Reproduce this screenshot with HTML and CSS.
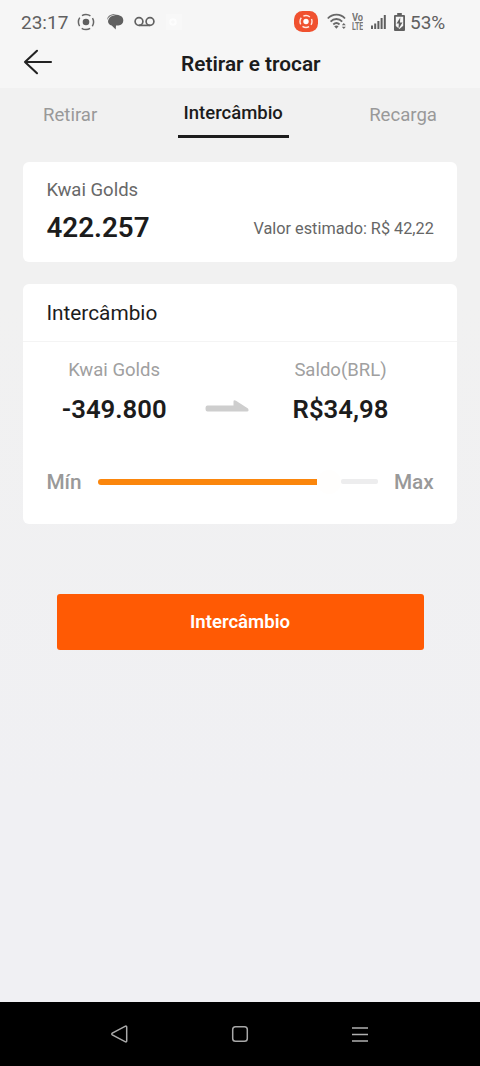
FILE: index.html
```html
<!DOCTYPE html>
<html lang="pt-BR">
<head>
<meta charset="utf-8">
<title>Retirar e trocar</title>
<link rel="stylesheet" href="styles.css">
</head>
<body>
<div class="screen">
  <div class="top">
    <div class="status">
      <span class="clock">23:17</span>
      <svg class="ic-record" width="18" height="18" viewBox="0 0 18 18"><circle cx="9" cy="9" r="3.300" fill="#5e5e5e"/><circle cx="9" cy="9" r="7.600" fill="none" stroke="#666" stroke-width="1.500" stroke-dasharray="8.900 3.038" stroke-dashoffset="4.450"/></svg>
      <svg class="ic-chat" width="18" height="18" viewBox="0 0 18 18"><path d="M1.200 7C.8 3.200 4.500 1 8.500 1h4C8 1.300 3.200 2.800 1.200 7z" fill="#808080"/><path d="M8.500 2.200c5.500-1 8.800 1.500 8.800 5.200 0 2.800-2 4.800-5 5.200h-2.300l-.3 4-4-4C3.500 12.300 2 10.500 2 8 2.600 5 4.700 3 8.500 2.200z" fill="#606060"/></svg>
      <svg class="ic-voice" width="21" height="12" viewBox="0 0 21 12"><g fill="none" stroke="#626262" stroke-width="1.700"><circle cx="5" cy="5.500" r="3.900"/><circle cx="16" cy="5.500" r="3.900"/><path d="M5 9.400h11"/></g></svg>
      <svg class="ic-faint" width="16" height="16" viewBox="0 0 16 16"><rect width="16" height="16" fill="#f8f8f8"/><circle cx="7" cy="8" r="2.800" fill="none" stroke="#fdfdfd" stroke-width="2"/></svg>
      <svg class="ic-rec" width="24" height="21" viewBox="0 0 24 21"><rect width="24" height="21" rx="8.500" fill="#f0512f"/><circle cx="12" cy="10.500" r="2.700" fill="#fff"/><circle cx="12" cy="10.500" r="6" fill="none" stroke="#ffe9e2" stroke-width="1.400" stroke-dasharray="6.900 2.520" stroke-dashoffset="3.450"/></svg>
      <svg class="ic-wifi" width="20" height="17" viewBox="0 0 20 17"><g fill="none" stroke="#686868" stroke-width="1.800"><path d="M.8 5.500C5.500.4 13.500.4 18 5.500"/><path d="M3.600 8.600c3.300-3.500 8.300-3.500 11.600 0"/><path d="M6.300 11.500c2-1.900 4.300-1.900 6.200 0"/></g><path d="M7.200 13.300q2.200-1.500 4.400 0L9.400 15.700zM14.800 12.300l2-2.200 2 2.200zM14.800 13.700h4l-2 2.200z" fill="#686868"/></svg>
      <span class="volte"><span class="vo">Vo</span><span class="lte">LTE</span></span>
      <svg class="ic-signal" width="15" height="14" viewBox="0 0 15 14"><path d="M0 10.500h2V14H0zM3.200 8.500h2V14h-2zM6.400 6h2v8h-2zM9.600 3h2v11h-2zM12.800 0h2v14h-2z" fill="#5e5e5e"/></svg>
      <svg class="ic-battery" width="11" height="18" viewBox="0 0 11 18"><path d="M3.200 0h4.600v2H10q1 0 1 1v14q0 1-1 1H1q-1 0-1-1V3q0-1 1-1h2.200z" fill="#606060"/><path d="M1.800 3.700h7.400v9L5.500 16 1.800 13z" fill="#f6f6f6"/><path d="M6.300 4.500L2.500 10.500h2.300L4.500 16l4-6.500H6z" fill="#606060"/></svg>
      <span class="pct">53%</span>
    </div>
    <header class="header">
      <svg class="back" width="30" height="26" viewBox="0 0 30 26"><path d="M14 1.800L2 13l12 11.200M2 13h26" fill="none" stroke="#222" stroke-width="2.100" stroke-linecap="round" stroke-linejoin="round"/></svg>
      <h1 class="title">Retirar e trocar</h1>
    </header>
  </div>
  <nav class="tabs">
    <span class="tab">Retirar</span>
    <span class="tab active">Intercâmbio</span>
    <span class="tab last">Recarga</span>
  </nav>
  <section class="card balance">
    <div class="label">Kwai Golds</div>
    <div class="line"><span class="amount">422.257</span><span class="estimate">Valor estimado: R$ 42,22</span></div>
  </section>
  <section class="card exchange">
    <h2 class="heading">Intercâmbio</h2>
    <div class="pair">
      <div class="from"><div class="caption">Kwai Golds</div><div class="value">-349.800</div></div>
      <svg class="arrow" width="44" height="12" viewBox="0 0 44 12"><path d="M2.500 5.500H28.500V1.500Q28.500-.3 31 .7L43 8.500q1.500 3-1 3H2.500Q.5 11.500.5 8.500t2-3z" fill="#cecece"/></svg>
      <div class="to"><div class="caption">Saldo(BRL)</div><div class="value">R$34,98</div></div>
    </div>
    <div class="slider">
      <span class="limit">Mín</span>
      <div class="track"><div class="fill"></div><div class="knob"></div><div class="rest"></div></div>
      <span class="limit">Max</span>
    </div>
  </section>
  <button class="submit">Intercâmbio</button>
  <footer class="navbar">
    <svg width="20" height="20" viewBox="0 0 20 20"><path d="M15.500 2.200L2.300 9.200q-1 .8 0 1.600L15.500 17.800q1.200.4 1.200-1V3.200q0-1.400-1.200-1z" fill="none" stroke="#aaa" stroke-width="1.500"/></svg>
    <svg width="20" height="20" viewBox="0 0 20 20"><rect x="2.700" y="2.700" width="14.600" height="14.600" rx="2.800" fill="none" stroke="#a8a8a8" stroke-width="1.500"/></svg>
    <svg width="20" height="20" viewBox="0 0 20 20"><path d="M2 4h16M2 10.500h16M2 17h16" stroke="#b0b0b0" stroke-width="1.600"/></svg>
  </footer>
</div>
</body>
</html>
```
FILE: styles.css
```css
* { box-sizing: border-box; }
body { margin: 0; font-family: Roboto, "Liberation Sans", sans-serif; color: #1c1c1c; }
.screen { width: 480px; height: 1066px; display: flex; flex-direction: column; background: linear-gradient(#f1f1f1 300px, #f0f0f3 800px); overflow: hidden; }
.top { height: 88px; background: #f6f6f6; flex: none; }
.status { height: 44px; padding-left: 21px; display: flex; align-items: center; color: #606060; }
.status svg { flex: none; display: block; }
.clock { width: 48px; font-size: 19px; line-height: 45px; white-space: nowrap; }
.ic-record { margin-left: 8px; margin-top: -1px; }
.ic-chat { margin-left: 11px; }
.ic-voice { margin-left: 10px; margin-top: -1px; }
.ic-faint { margin-left: 11px; }
.ic-rec { margin-left: 112px; margin-top: -1px; }
.ic-wifi { margin-left: 9px; margin-top: -2px; }
.volte { width: 13px; margin-left: 5px; margin-top: -1px; display: flex; flex-direction: column; align-items: flex-start; font: 700 10px/9px Roboto, sans-serif; color: #777; }
.volte span { height: 9px; overflow: hidden; transform-origin: left; }
.vo { transform: scaleX(.93); }
.lte { transform: scaleX(.7); }
.ic-signal { margin-left: 6px; margin-top: -1px; }
.ic-battery { margin-left: 8px; margin-top: -1px; }
.pct { margin-left: 5px; font-size: 19px; line-height: 45px; }
.header { height: 44px; padding-left: 23px; display: flex; }
.back { flex: none; margin-top: 5px; }
.title { margin: 0 0 0 128px; font-size: 20.8px; line-height: 40px; font-weight: 600; white-space: nowrap; }
.tabs { height: 51px; flex: none; display: flex; justify-content: space-between; padding: 0 43px; }
.tab { font-size: 18.6px; line-height: 54px; color: #999; }
.tab.active { height: 50px; width: 111px; line-height: 50px; font-size: 18.5px; text-align: center; font-weight: 500; color: #1c1c1c; border-bottom: 3px solid #1c1c1c; }
.card { width: 433.4px; margin-left: 23.4px; flex: none; border-radius: 6px; background: #fff; }
.balance { height: 99.4px; margin-top: 23.4px; padding: 16px 23px; }
.label { font-size: 18.5px; line-height: 24px; color: #686868; }
.line { margin-top: 8px; display: flex; justify-content: space-between; align-items: center; }
.amount { font-size: 27.8px; line-height: 36px; font-weight: 600; }
.estimate { padding-top: 2px; font-size: 16.25px; line-height: 24px; color: #666; }
.exchange { height: 240px; margin-top: 22.6px; }
.heading { margin: 0; height: 58px; padding-left: 23px; font-size: 20.8px; line-height: 58px; font-weight: 400; border-bottom: 1px solid #f4f4f4; }
.pair { display: flex; height: 100px; }
.from, .to { text-align: center; padding-top: 15px; }
.from { width: 181.6px; }
.to { width: 183px; }
.arrow { flex: none; margin-top: 58px; }
.caption { font-size: 18.5px; line-height: 26px; color: #a0a0a0; }
.value { font-size: 25.7px; line-height: 32px; font-weight: 600; margin-top: 10px; }
.slider { height: 79px; padding: 0 23px; display: flex; align-items: center; justify-content: space-between; }
.limit { font-size: 20.8px; line-height: 28px; font-weight: 500; color: #999; }
.track { width: 280px; display: flex; align-items: center; }
.fill { width: 219px; height: 6px; border-radius: 3px 0 0 3px; background: #fb860c; }
.knob { width: 24px; height: 24px; border-radius: 50%; background: #fffefd; }
.rest { width: 37px; height: 5px; border-radius: 2px; background: #ededee; }
.submit { width: 367px; height: 55.4px; margin: 70px auto 0; padding: 0; flex: none; border: 0; border-radius: 3px; background: #ff5a04; color: #fff; font: 600 18.6px/55px Roboto, sans-serif; }
.navbar { margin-top: auto; height: 64px; flex: none; display: flex; justify-content: center; align-items: center; gap: 100px; background: #000; }
```
